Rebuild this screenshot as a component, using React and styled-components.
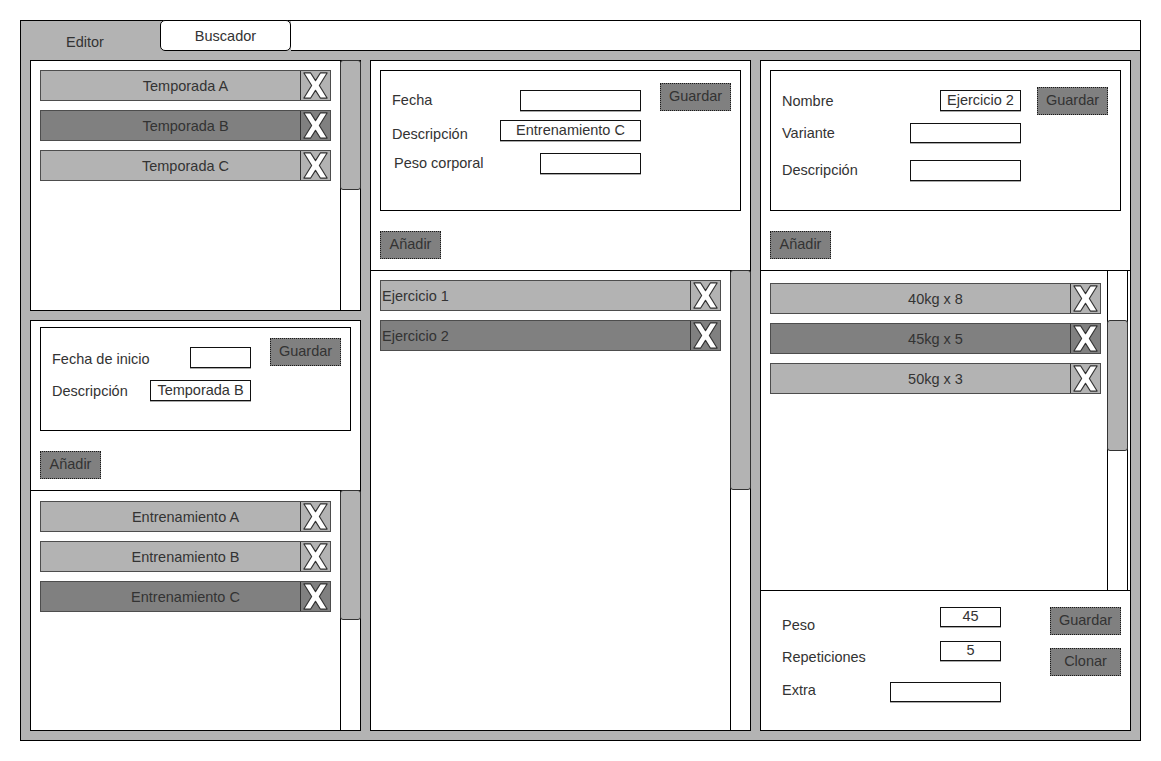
import React from "react";
import styled, { createGlobalStyle } from "styled-components";

const GlobalStyle = createGlobalStyle`
  html, body {
    margin: 0;
    padding: 0;
    background: #fff;
  }
  body {
    font-family: "Liberation Sans", Arial, sans-serif;
    font-size: 14.5px;
    color: #333;
  }
  * {
    box-sizing: border-box;
  }
`;

const seasons = [
  { name: "Temporada A" },
  { name: "Temporada B", active: true },
  { name: "Temporada C" },
];
const trainings = [
  { name: "Entrenamiento A" },
  { name: "Entrenamiento B" },
  { name: "Entrenamiento C", active: true },
];
const exercises = [{ name: "Ejercicio 1" }, { name: "Ejercicio 2", active: true }];
const sets = [
  { name: "40kg x 8" },
  { name: "45kg x 5", active: true },
  { name: "50kg x 3" },
];

const XIcon = () => (
  <svg width="29" height="29" viewBox="0 0 30 30">
    <polygon
      points="3,2 10,2 15,10 20,2 27,2 19,15 27,28 20,28 15,20 10,28 3,28 11,15"
      fill="#fff"
      stroke="#333"
      strokeWidth="1.2"
      strokeLinejoin="round"
    />
  </svg>
);

const ListItems = ({ items, align = "center" }) =>
  items.map((it) => (
    <Item key={it.name} $active={it.active}>
      <ItemText $align={align}>{it.name}</ItemText>
      <DeleteBox>
        <XIcon />
      </DeleteBox>
    </Item>
  ));

const App = () => {
  return (
    <Page>
      <GlobalStyle />
      <Frame>
        <TabBar>
          <EditorTab>Editor</EditorTab>
          <SearchTab>Buscador</SearchTab>
          <TabFill />
        </TabBar>

        <Body>
          {/* temporadas / entrenamientos */}
          <Column $w={331}>
            <Panel $h={251}>
              <ListSection>
                <ItemList $pt={9} $pr={9}>
                  <ListItems items={seasons} />
                </ItemList>
                <Track>
                  <Thumb $h={130} />
                </Track>
              </ListSection>
            </Panel>

            <Panel>
              <EditSection $h={169}>
                <FormBox $mt={6} $h={104}>
                  <Fields $mt={19} $ml={11} $w={199}>
                    <Row>
                      <Label $dy={2}>Fecha de inicio</Label>
                      <Field $w={61} readOnly value="" />
                    </Row>
                    <Row $mt={12}>
                      <Label $dy={1}>Descripción</Label>
                      <Field $w={101} readOnly value="Temporada B" />
                    </Row>
                  </Fields>
                  <Button $mt={10} $mr={9}>Guardar</Button>
                </FormBox>
                <AddButton>Añadir</AddButton>
              </EditSection>
              <ListSection $divider>
                <ItemList $pt={10} $pr={9}>
                  <ListItems items={trainings} />
                </ItemList>
                <Track>
                  <Thumb $h={130} />
                </Track>
              </ListSection>
            </Panel>
          </Column>

          {/* ejercicios */}
          <Column $w={381}>
            <Panel>
              <EditSection $h={209}>
                <FormBox $mt={9} $h={141}>
                  <Fields $mt={19} $ml={11} $w={249}>
                    <Row>
                      <Label>Fecha</Label>
                      <Field $w={121} readOnly value="" />
                    </Row>
                    <Row $mt={9}>
                      <Label $dy={4}>Descripción</Label>
                      <Field $w={141} readOnly value="Entrenamiento C" />
                    </Row>
                    <Row $mt={12}>
                      <Label $dx={2}>Peso corporal</Label>
                      <Field $w={101} readOnly value="" />
                    </Row>
                  </Fields>
                  <Button $mt={12} $mr={9}>Guardar</Button>
                </FormBox>
                <AddButton>Añadir</AddButton>
              </EditSection>
              <ListSection $divider>
                <ItemList $pt={9} $pr={9}>
                  <ListItems items={exercises} align="left" />
                </ItemList>
                <Track>
                  <Thumb $h={220} />
                </Track>
              </ListSection>
            </Panel>
          </Column>

          {/* series */}
          <Column $w={371}>
            <Panel>
              <EditSection $h={209}>
                <FormBox $mt={9} $h={141}>
                  <Fields $mt={19} $ml={11} $w={239}>
                    <Row>
                      <Label $dy={1}>Nombre</Label>
                      <Field $w={81} readOnly value="Ejercicio 2" />
                    </Row>
                    <Row $mt={12} $h={20}>
                      <Label>Variante</Label>
                      <Field $w={111} $h={20} readOnly value="" />
                    </Row>
                    <Row $mt={17}>
                      <Label>Descripción</Label>
                      <Field $w={111} readOnly value="" />
                    </Row>
                  </Fields>
                  <Button $mt={16} $mr={12}>Guardar</Button>
                </FormBox>
                <AddButton>Añadir</AddButton>
              </EditSection>
              <ListSection $divider $h={320}>
                <ItemList $pt={12} $pr={6}>
                  <ListItems items={sets} />
                </ItemList>
                <Track $inset>
                  <Thumb $mt={49} $h={131} />
                </Track>
              </ListSection>
              <SetForm>
                <Fields $mt={16} $ml={21} $w={219}>
                  <Row $h={20}>
                    <Label $dy={8}>Peso</Label>
                    <Field $w={61} $h={20} readOnly value="45" />
                  </Row>
                  <Row $mt={14} $h={20}>
                    <Label $dy={6}>Repeticiones</Label>
                    <Field $w={61} $h={20} readOnly value="5" />
                  </Row>
                  <Row $mt={21} $h={20}>
                    <Label $dy={-2}>Extra</Label>
                    <Field $w={111} $h={20} readOnly value="" />
                  </Row>
                </Fields>
                <ButtonStack>
                  <Button>Guardar</Button>
                  <Button>Clonar</Button>
                </ButtonStack>
              </SetForm>
            </Panel>
          </Column>
        </Body>
      </Frame>
    </Page>
  );
};

export default App;

const Page = styled.div`
  padding: 20px;
`;

const Frame = styled.div`
  width: 1121px;
  height: 721px;
  border: 1px solid #000;
  background: #b3b3b3;
  display: flex;
  flex-direction: column;
`;

const TabBar = styled.div`
  display: flex;
  height: 30px;
  flex-shrink: 0;
`;

const EditorTab = styled.div`
  width: 139px;
  padding: 11px 0 0 45px;
  display: flex;
  align-items: center;
  color: #333;
`;

const SearchTab = styled.div`
  width: 131px;
  height: 31px;
  margin-top: -1px;
  background: #fff;
  border: 1px solid #000;
  border-radius: 5px;
  display: flex;
  align-items: center;
  justify-content: center;
  color: #333;
`;

const TabFill = styled.div`
  flex: 1;
  background: #fff;
  border-bottom: 1px solid #000;
`;

const Body = styled.div`
  flex: 1;
  min-height: 0;
  display: flex;
  gap: 9px;
  padding: 9px;
`;

const Column = styled.div`
  width: ${(p) => p.$w}px;
  display: flex;
  flex-direction: column;
  gap: 9px;
`;

const Panel = styled.div`
  background: #fff;
  border: 1px solid #000;
  display: flex;
  flex-direction: column;
  height: ${(p) => (p.$h ? `${p.$h}px` : "auto")};
  flex: ${(p) => (p.$h ? "none" : 1)};
  min-height: 0;
`;

const EditSection = styled.div`
  height: ${(p) => p.$h}px;
  flex: none;
`;

const ListSection = styled.div`
  display: flex;
  border-top: ${(p) => (p.$divider ? "1px solid #000" : "none")};
  height: ${(p) => (p.$h ? `${p.$h}px` : "auto")};
  flex: ${(p) => (p.$h ? "none" : 1)};
  min-height: 0;
`;

const ItemList = styled.div`
  flex: 1;
  display: flex;
  flex-direction: column;
  gap: 9px;
  padding: ${(p) => p.$pt}px ${(p) => p.$pr}px 0 9px;
`;

const Item = styled.div`
  display: grid;
  height: 31px;
  background: ${(p) => (p.$active ? "#808080" : "#b3b3b3")};
  border: 1px solid #4d4d4d;
  & > * {
    grid-area: 1 / 1;
  }
`;

const ItemText = styled.span`
  align-self: center;
  text-align: ${(p) => p.$align};
  padding-left: ${(p) => (p.$align === "left" ? "1px" : "0")};
  color: #333;
  line-height: 18px;
`;

const DeleteBox = styled.span`
  justify-self: end;
  width: 30px;
  height: 29px;
  border-left: 1px solid #333;
  display: flex;
  align-items: center;
  justify-content: center;
`;

const Track = styled.div`
  width: ${(p) => (p.$inset ? 21 : 20)}px;
  flex: none;
  border-left: 1px solid #000;
  border-right: ${(p) => (p.$inset ? "1px solid #000" : "none")};
  margin-right: ${(p) => (p.$inset ? 2 : 0)}px;
  display: flex;
  flex-direction: column;
`;

const Thumb = styled.div`
  height: ${(p) => p.$h}px;
  margin: ${(p) => p.$mt || -1}px -1px 0 -1px;
  background: #b3b3b3;
  border: 1px solid #333;
  border-radius: 3px;
`;

const FormBox = styled.div`
  margin: ${(p) => p.$mt}px 9px 0 9px;
  height: ${(p) => p.$h}px;
  border: 1px solid #000;
  display: flex;
  align-items: flex-start;
`;

const Fields = styled.div`
  display: flex;
  flex-direction: column;
  margin: ${(p) => p.$mt}px 0 0 ${(p) => p.$ml}px;
  width: ${(p) => p.$w}px;
  flex: none;
`;

const Row = styled.div`
  display: flex;
  justify-content: space-between;
  align-items: flex-start;
  height: ${(p) => p.$h || 21}px;
  margin-top: ${(p) => p.$mt || 0}px;
`;

const Label = styled.span`
  line-height: 20px;
  margin-top: ${(p) => p.$dy || 0}px;
  margin-left: ${(p) => p.$dx || 0}px;
  color: #333;
  white-space: nowrap;
`;

const Field = styled.input`
  width: ${(p) => p.$w}px;
  height: ${(p) => p.$h || 21}px;
  flex: none;
  border: 1px solid #111;
  box-shadow: 0 1px 0 #aaa;
  background: #fff;
  color: #333;
  font: inherit;
  text-align: center;
  padding: 0 2px 2px;
  outline: none;
`;

const Button = styled.button`
  width: 71px;
  height: 28px;
  margin: ${(p) => p.$mt || 0}px ${(p) => p.$mr || 0}px 0 auto;
  padding: 0 0 2px;
  background: #808080;
  border: 1px dotted #1a1a1a;
  color: #333;
  font: inherit;
  flex: none;
`;

const AddButton = styled.button`
  display: block;
  width: 61px;
  height: 28px;
  margin: 20px 0 0 9px;
  padding: 0 0 2px;
  background: #808080;
  border: 1px dotted #1a1a1a;
  color: #333;
  font: inherit;
`;

const SetForm = styled.div`
  flex: 1;
  display: flex;
  align-items: flex-start;
  border-top: 1px solid #000;
`;

const ButtonStack = styled.div`
  margin: 16px 9px 0 auto;
  display: flex;
  flex-direction: column;
  gap: 13px;
`;
